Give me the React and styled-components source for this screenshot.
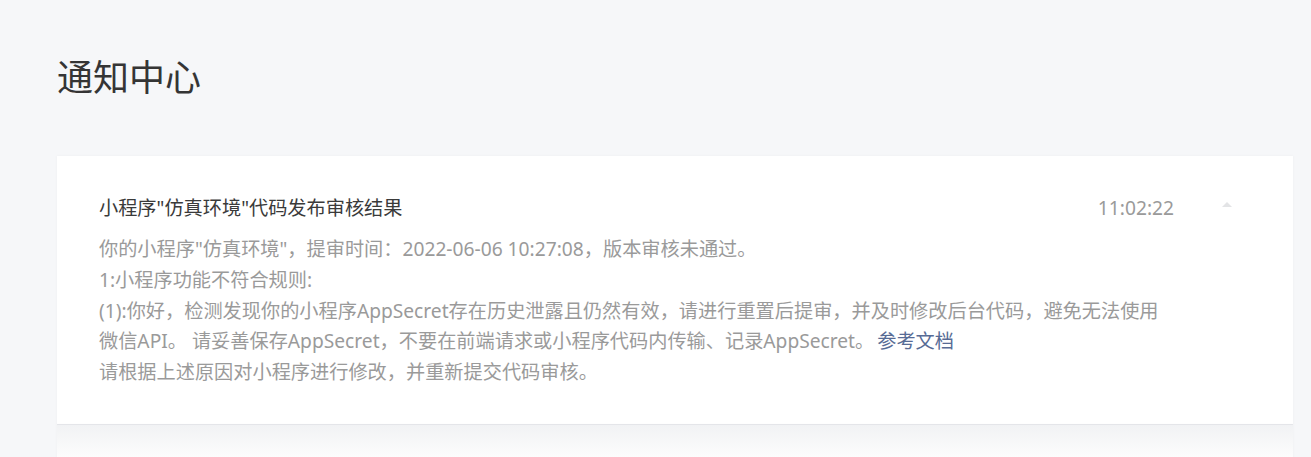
import styled, { createGlobalStyle } from 'styled-components';

const GlobalStyle = createGlobalStyle`
  html, body {
    margin: 0;
    padding: 0;
    background: #f6f7f9;
  }
  body {
    font-family: "Noto Sans", "Noto Sans CJK SC", sans-serif;
    color: #353535;
  }
`;

const Page = styled.main`
  padding: 0 18px 0 57px;
  height: 457px;
  overflow: hidden;
`;

const PageTitle = styled.h1`
  margin: 0;
  padding: 54px 0;
  font-size: 36px;
  font-weight: 400;
  line-height: 48px;
  color: #353535;
`;

const List = styled.section`
  display: flex;
  flex-direction: column;
`;

const Card = styled.article`
  display: flex;
  background: ${(p) =>
    p.$collapsed ? 'linear-gradient(#f1f2f4, #fdfdfd 34px, #fff)' : '#fff'};
  border-bottom: 1px solid #e7e8ec;
  box-shadow: 0 0 3px rgba(0, 0, 0, 0.04);
  min-height: ${(p) => (p.$collapsed ? '80px' : 'auto')};
`;

const CardBody = styled.div`
  flex: 1;
  min-width: 0;
  padding: 36px 0 36px 42px;
`;

const Header = styled.div`
  display: flex;
  align-items: center;
  justify-content: space-between;
  margin-bottom: 11px;
`;

const Title = styled.h2`
  margin: 0;
  font-size: 19.2px;
  font-weight: 400;
  line-height: 31px;
  color: #3a3a3a;
`;

const Time = styled.span`
  font-size: 19.2px;
  line-height: 31px;
  color: #9a9a9a;
`;

const Message = styled.div`
  font-size: 19.2px;
  line-height: 30.8px;
  color: #9a9a9a;
`;

const Line = styled.p`
  margin: 0;
`;

const Link = styled.a`
  display: inline-block;
  margin-left: 3px;
  color: #576b95;
  text-decoration: none;
`;

const Toggle = styled.button`
  width: 119px;
  flex: none;
  align-self: flex-start;
  margin-top: 46px;
  padding: 0 0 0 48px;
  border: 0;
  background: none;
  display: flex;
  cursor: pointer;

  &::before {
    content: '';
    width: 0;
    height: 0;
    border-left: 5px solid transparent;
    border-right: 5px solid transparent;
    border-bottom: 5px solid #e3e4e6;
  }
`;

const App = () => {
  return (
    <>
      <GlobalStyle />
      <Page>
        <PageTitle>通知中心</PageTitle>
        <List>
          <Card>
            <CardBody>
              <Header>
                <Title>小程序"仿真环境"代码发布审核结果</Title>
                <Time>11:02:22</Time>
              </Header>
              <Message>
                <Line>
                  你的小程序"仿真环境"，提审时间：2022-06-06 10:27:08，版本审核未通过。
                </Line>
                <Line>1:小程序功能不符合规则:</Line>
                <Line>
                  (1):你好，检测发现你的小程序AppSecret存在历史泄露且仍然有效，请进行重置后提审，并及时修改后台代码，避免无法使用微信API。
                  请妥善保存AppSecret，不要在前端请求或小程序代码内传输、记录AppSecret。<Link href="#">参考文档</Link>
                </Line>
                <Line>请根据上述原因对小程序进行修改，并重新提交代码审核。</Line>
              </Message>
            </CardBody>
            <Toggle aria-label="收起" />
          </Card>
          <Card $collapsed />
        </List>
      </Page>
    </>
  );
};

export default App;
